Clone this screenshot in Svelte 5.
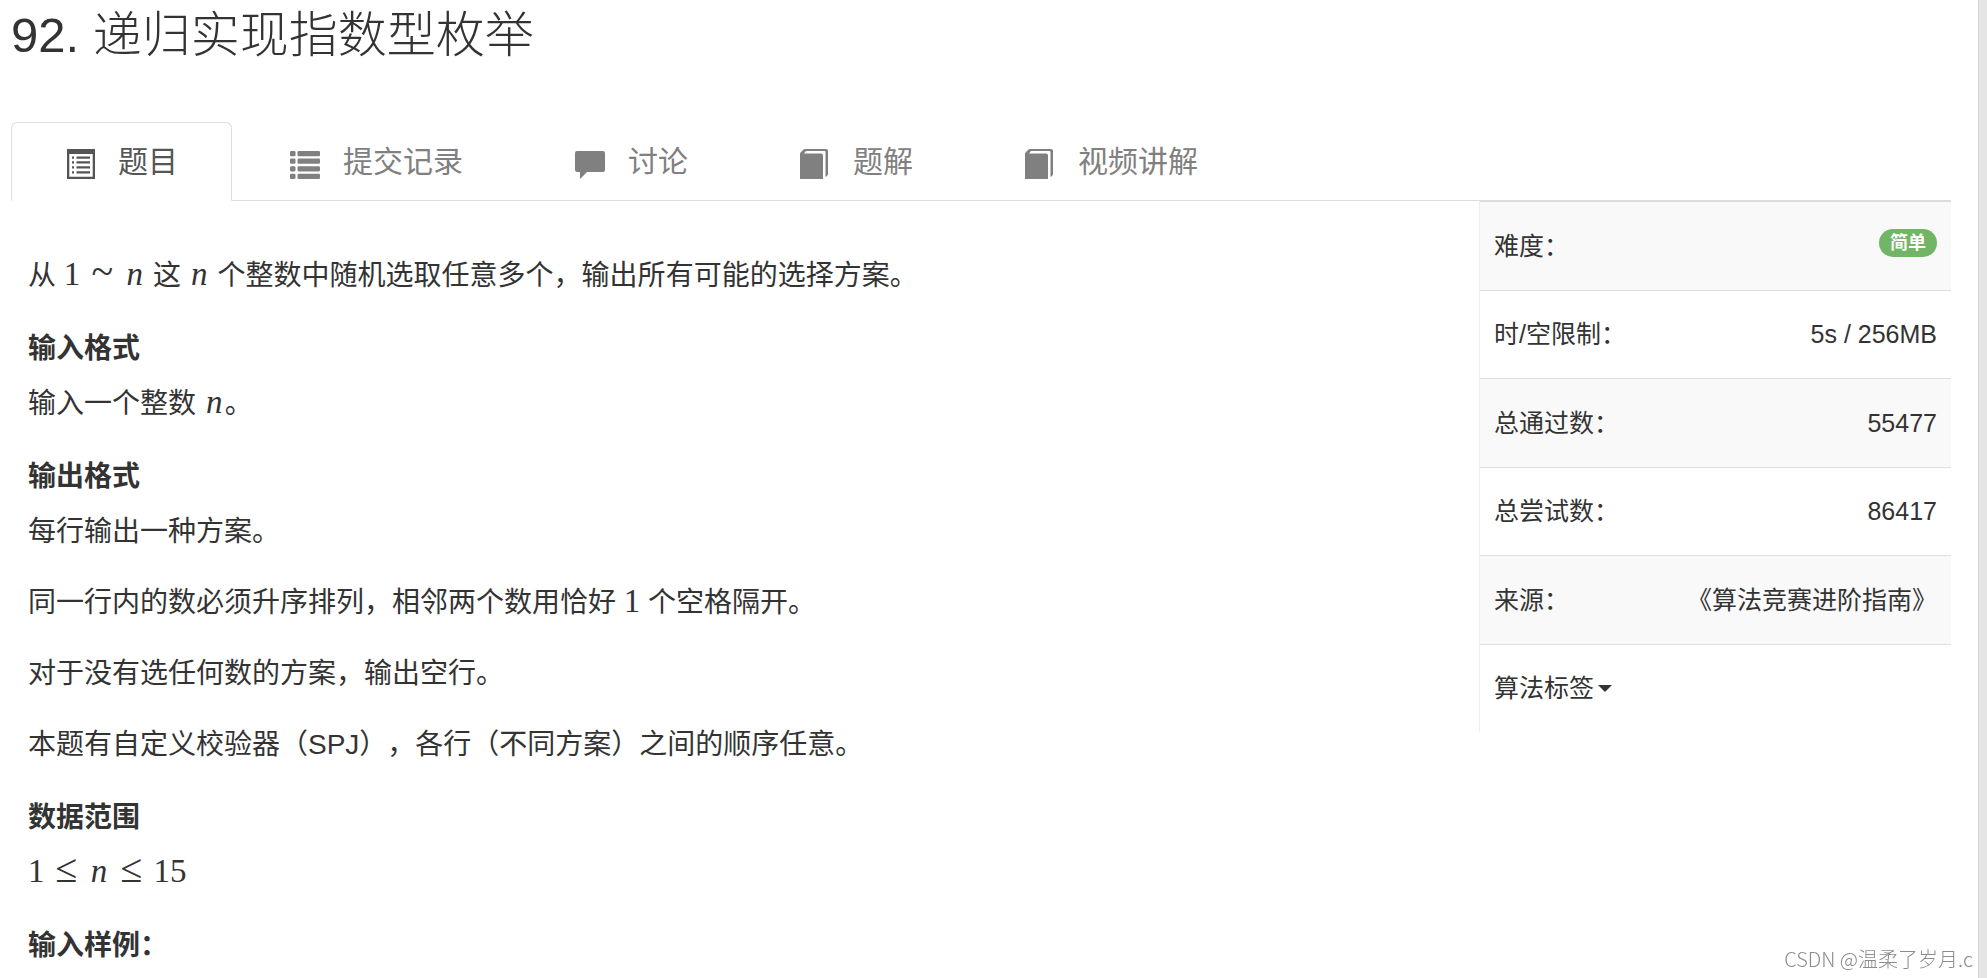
<script lang="ts">
	type Tab = {
		id: string;
		nombre: string;
		icon: string;
	};

	const tabs: Tab[] = [
		{ id: 'problem', nombre: '题目', icon: 'list-alt' },
		{ id: 'submissions', nombre: '提交记录', icon: 'list' },
		{ id: 'discussion', nombre: '讨论', icon: 'comment' },
		{ id: 'solution', nombre: '题解', icon: 'book' },
		{ id: 'video', nombre: '视频讲解', icon: 'book' }
	];

	const info = [
		{ label: '时/空限制：', value: '5s / 256MB' },
		{ label: '总通过数：', value: '55477' },
		{ label: '总尝试数：', value: '86417' },
		{ label: '来源：', value: '《算法竞赛进阶指南》' }
	];

	let activeTab = $state('problem');
</script>

{#snippet num(value: string)}<span class="num">{value}</span>{/snippet}
{#snippet variable()}<i class="var">n</i>{/snippet}

<div class="page">
	<h1>92. 递归实现指数型枚举</h1>

	<nav class="tabs">
		{#each tabs as tab}
			<a
				href={'#' + tab.id}
				class="tab"
				class:active={activeTab === tab.id}
				onclick={() => (activeTab = tab.id)}
			>
				<svg class="icon" viewBox="0 0 30 32" aria-hidden="true">
					{#if tab.icon === 'list-alt'}
						<path
							fill-rule="evenodd"
							d="M2 1h28v30H2zM4.300 6v22.700h23.400V6zM7 8.500h2v2.300H7zM11.500 8.500h13.500v2.300H11.500zM7 13.300h2v2.300H7zM11.500 13.300h13.500v2.300H11.500zM7 18.300h2v2.300H7zM11.500 18.300h13.500v2.300H11.500zM7 23.300h2v2.300H7zM11.500 23.300h13.500v2.300H11.500z"
						/>
					{:else if tab.icon === 'list'}
						{#each [3, 10.6, 18.2, 25.8] as y}
							<rect x="0" {y} width="5.500" height="5.200" rx="1.300" />
							<rect x="7.500" {y} width="22.500" height="5.200" rx="1.300" />
						{/each}
					{:else if tab.icon === 'comment'}
						<path d="M2 3h26q2 0 2 2v17q0 2-2 2H12l-7 7v-7H2q-2 0-2-2V5q0-2 2-2z" />
					{:else}
						<path d="M0 6q0-1 1-2l2-2q1-1 2-1h21q2 0 2 2v23q0 1-1 2l-1.500 1V4q0-1-1-1H6L4 5.500h17q2 0 2 2V31H0z" />
					{/if}
				</svg>
				<span>{tab.nombre}</span>
			</a>
		{/each}
	</nav>

	<div class="content">
		<main>
			<p>
				从 {@render num('1')}<span class="rel">~</span>{@render variable()} 这 {@render variable()} 个整数中随机选取任意多个，输出所有可能的选择方案。
			</p>

			<h4>输入格式</h4>
			<p>输入一个整数 {@render variable()}。</p>

			<h4>输出格式</h4>
			<p>每行输出一种方案。</p>
			<p>同一行内的数必须升序排列，相邻两个数用恰好 {@render num('1')} 个空格隔开。</p>
			<p>对于没有选任何数的方案，输出空行。</p>
			<p>本题有自定义校验器（SPJ），各行（不同方案）之间的顺序任意。</p>

			<h4>数据范围</h4>
			<p>
				{@render num('1')}<span class="rel">≤</span>{@render variable()}<span class="rel">≤</span>{@render num('15')}
			</p>

			<h4>输入样例：</h4>
		</main>

		<aside>
			<table>
				<tbody>
					<tr>
						<th scope="row">难度：</th>
						<td><span class="badge">简单</span></td>
					</tr>
					{#each info as row}
						<tr>
							<th scope="row">{row.label}</th>
							<td>{row.value}</td>
						</tr>
					{/each}
					<tr>
						<th scope="row" colspan="2">
							<button type="button">算法标签<span class="caret"></span></button>
						</th>
					</tr>
				</tbody>
			</table>
		</aside>
	</div>
</div>

<div class="watermark">CSDN @温柔了岁月.c</div>

<style>
	:global(body) {
		background: #e5e5e5;
		overflow: hidden;
	}

	.page {
		box-sizing: border-box;
		min-height: 100vh;
		margin-right: 8px;
		padding: 0 27px 0 11px;
		border-right: 1px solid #d4d4d4;
		background: #fff;
		color: #333;
		font-family: 'Liberation Sans', 'Noto Sans CJK SC', sans-serif;
		font-size: 28px;
		text-spacing-trim: space-all;
	}

	h1 {
		margin: 0;
		padding-bottom: 52px;
		font-size: 49px;
		font-weight: 300;
		line-height: 70px;
	}

	.tabs {
		display: flex;
		gap: 4px;
		border-bottom: 1px solid #ddd;
	}

	.tab {
		display: flex;
		align-items: center;
		gap: 23px;
		margin-bottom: -1px;
		padding: 0 53px;
		border: 1px solid transparent;
		border-radius: 6px 6px 0 0;
		color: #808080;
		font-size: 30px;
		line-height: 77px;
		text-decoration: none;
	}

	.tab.active {
		border-color: #ddd;
		border-bottom-color: #fff;
		background: #fff;
		color: #555;
	}

	.icon {
		width: 30px;
		height: 32px;
		margin-top: 4px;
		fill: currentColor;
	}

	.content {
		display: flex;
		align-items: flex-start;
		justify-content: space-between;
	}

	main {
		padding: 53px 17px 0;
	}

	p,
	h4 {
		margin: 0;
		font-size: 28px;
		line-height: 44px;
	}

	p {
		margin-bottom: 27px;
	}

	h4 {
		margin: 29px 0 11px;
		font-weight: 700;
	}

	/* formulas must not stretch the line they sit in */
	.num,
	.var,
	.rel {
		display: inline-block;
		font-family: 'Liberation Serif', serif;
		font-size: 33px;
		line-height: 24px;
		text-align: center;
	}

	.var {
		width: 21px;
	}

	.rel {
		width: 26px;
		margin: 0 9px;
		font-size: 40px;
	}

	aside {
		width: 24%;
		min-width: 472px;
	}

	table {
		width: 100%;
		height: 531px;
		border-left: 1px solid #eee;
		border-spacing: 0;
		font-size: 25px;
		line-height: 34px;
	}

	tr:nth-child(odd) {
		background: #f9f9f9;
	}

	th,
	td {
		padding: 0 14px;
		border-top: 1px solid #ddd;
		font-weight: 400;
		text-align: left;
	}

	td {
		text-align: right;
	}

	.badge {
		display: inline-block;
		padding: 0 11px;
		border-radius: 14px;
		background: #73b566;
		color: #fff;
		font-size: 18px;
		font-weight: 700;
		line-height: 28px;
		vertical-align: top;
	}

	button {
		display: flex;
		align-items: center;
		gap: 4px;
		padding: 0;
		border: 0;
		background: none;
		color: inherit;
		font: inherit;
	}

	.caret {
		border: 7px solid transparent;
		border-top-color: #333;
		border-bottom: 0;
	}

	.watermark {
		position: fixed;
		right: 14px;
		bottom: 5px;
		color: #8c8c8c;
		font-family: 'Noto Sans CJK SC', sans-serif;
		font-size: 20px;
		font-weight: 300;
		line-height: 28px;
	}
</style>
